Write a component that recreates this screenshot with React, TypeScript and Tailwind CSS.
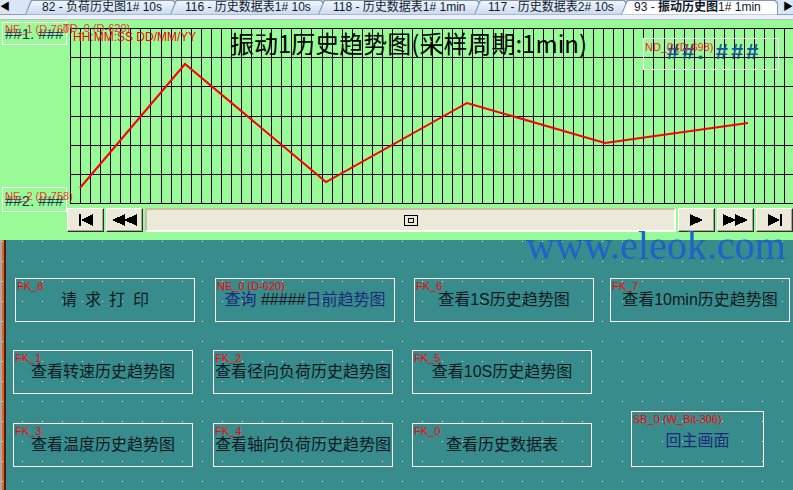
import React from "react";

const tabs = [
  { label: "82 - 负荷历史图1# 10s", box: "ml-[17px] w-[151px]", pad: "pl-[17px]" },
  { label: "116 - 历史数据表1# 10s", box: "-ml-[6px] w-[154px]", pad: "pl-[15px]" },
  { label: "118 - 历史数据表1# 1min", box: "-ml-[6px] w-[162px]", pad: "pl-[15px]" },
  { label: "117 - 历史数据表2# 10s", box: "-ml-[6px] w-[153px]", pad: "pl-[14px]" },
];

const vLines = Array.from({ length: 73 }, (_, k) => Math.round(70 + k * 10.06) + 0.5);
const hLines = Array.from({ length: 7 }, (_, j) => Math.round(28 + j * 29.17) + 0.5);
const trend = "80,188 185,64 326,182 467,103 605,143 748,123";

function Tab({ label, box, pad, active }: { label: React.ReactNode; box: string; pad: string; active?: boolean }) {
  return (
    <div className={`relative h-[15px] shrink-0 ${box}`}>
      <div className="absolute inset-0 bg-[#7f98b8] [clip-path:polygon(6px_0,calc(100%-3px)_0,100%_3px,100%_100%,0_100%)]" />
      <div
        className={`absolute inset-[1px_1px_0_1px] [clip-path:polygon(6px_0,calc(100%-3px)_0,100%_3px,100%_100%,0_100%)] ${
          active ? "bg-white" : "bg-gradient-to-b from-[#f1f6fd] to-[#c8d9ef]"
        }`}
      />
      <span className={`relative block whitespace-nowrap text-[12px] leading-[15px] text-[#101828] ${pad}`}>{label}</span>
    </div>
  );
}

function NavButton({ children }: { children: React.ReactNode }) {
  return (
    <div className="flex h-full w-[37px] shrink-0 items-center justify-center border border-t-white border-l-white border-b-[#303030] border-r-[#303030] bg-[#ece9d8] shadow-[inset_-1px_-1px_0_#aca899]">
      {children}
    </div>
  );
}

function HmiButton({ tag, className, children }: { tag: string; className: string; children: React.ReactNode }) {
  return (
    <div className={`relative flex shrink-0 items-center justify-center border border-white ${className}`}>
      <span className="absolute left-[1px] top-[2px] whitespace-nowrap text-[11px] leading-none text-[#ff0000]">{tag}</span>
      <span className="whitespace-nowrap text-[16px] leading-none text-[#0b1a22]">{children}</span>
    </div>
  );
}

export default function App() {
  return (
    <div className="relative flex h-[490px] w-[793px] flex-col overflow-hidden font-['Liberation_Sans','Noto_Sans_CJK_SC',sans-serif]">
      {/* tab strip */}
      <div className="h-[20px] shrink-0 bg-[#eef2f8] border-b border-[#b4bcc8]">
        <div className="flex h-[15px] items-center border-b border-[#8aa0bd] bg-[#dbe6f4]">
          <span className="w-[8px] shrink-0 text-[10px] leading-none text-black">◀</span>
          {tabs.map((t) => (
            <Tab key={t.label} label={t.label} box={t.box} pad={t.pad} />
          ))}
          <Tab
            active
            box="-ml-[6px] w-[157px]"
            pad="pl-[13px]"
            label={
              <>
                93 - <b className="font-bold">振动历史图</b>1# 1min
              </>
            }
          />
          <span className="ml-[5px] text-[10px] leading-none text-black">▶</span>
        </div>
      </div>

      {/* trend screen */}
      <div className="flex h-[220px] shrink-0 flex-col bg-[#98fb98]">
        <div className="relative h-[188px] shrink-0">
          <svg className="absolute inset-0" width={793} height={188} viewBox="0 20 793 188" shapeRendering="crispEdges">
            {vLines.map((x) => (
              <line key={x} x1={x} y1={28} x2={x} y2={203} stroke="#000" strokeWidth={1} />
            ))}
            {hLines.map((y) => (
              <line key={y} x1={70} y1={y} x2={793} y2={y} stroke="#000" strokeWidth={1} />
            ))}
            <polyline points={trend} fill="none" stroke="#ff0000" strokeWidth={2} shapeRendering="auto" />
          </svg>

          <div className="absolute left-[230px] top-[11px] whitespace-nowrap font-['Noto_Sans_CJK_SC',sans-serif] text-[24px] leading-none text-black">
            振动1历史趋势图(采样周期:1min)
          </div>

          <div className="absolute left-[2px] top-[2px] h-[23px] w-[65px] border border-white">
            <span className="absolute left-[2px] top-[3px] text-[15px] leading-none text-[#17305e]">##1. ###</span>
            <span className="absolute left-[2px] top-[1px] whitespace-nowrap text-[11px] leading-none text-[#ff1a1a]/90">NE_1 (D-760)</span>
          </div>
          <span className="absolute left-[63px] top-[3px] whitespace-nowrap text-[11px] leading-none text-[#e83a2a]">TD_0 (D-620)</span>
          <span className="absolute left-[73px] top-[11px] whitespace-nowrap text-[12px] leading-none text-[#ff0000]">HH:MM:SS DD/MM/YY</span>

          <div className="absolute left-[2px] top-[167px] h-[25px] w-[65px] border border-white">
            <span className="absolute left-[2px] top-[5px] text-[15px] leading-none text-[#17305e]">##2. ###</span>
            <span className="absolute left-[2px] top-[3px] whitespace-nowrap text-[11px] leading-none text-[#ff1a1a]/90">NE_2 (D-758)</span>
          </div>

          <div className="absolute left-[643px] top-[18px] h-[32px] w-[136px] border border-white">
            <span className="absolute left-[23px] top-[2px] whitespace-nowrap text-[22px] font-bold leading-none tracking-[3px] text-[#1c4f96]">##. ###</span>
            <span className="absolute left-[1px] top-[3px] whitespace-nowrap text-[11px] leading-none text-[#ff1a1a]">ND_0 (D-698)</span>
          </div>
        </div>

        {/* playback bar */}
        <div className="flex h-[24px] shrink-0 gap-[2px] pl-[67px]">
          <NavButton>
            <svg width={14} height={12} viewBox="0 0 14 12" shapeRendering="crispEdges">
              <rect x={0} y={0} width={2} height={12} fill="#000" />
              <polygon points="2,6 14,0 14,12" fill="#000" />
            </svg>
          </NavButton>
          <NavButton>
            <svg width={26} height={12} viewBox="0 0 26 12" shapeRendering="crispEdges">
              <polygon points="0,6 13,0 13,12" fill="#000" />
              <polygon points="12,6 25,0 25,12" fill="#000" />
            </svg>
          </NavButton>
          <div className="flex flex-1 items-center justify-center border-2 border-[#c6bea6] border-r-white border-b-white bg-[#ece9d8]">
            <svg width={14} height={11} viewBox="0 0 14 11" shapeRendering="crispEdges">
              <rect x={0.5} y={0.5} width={13} height={10} fill="#ece9d8" stroke="#000" />
              <rect x={4.5} y={3.5} width={5} height={4} fill="none" stroke="#000" />
            </svg>
          </div>
          <NavButton>
            <svg width={13} height={12} viewBox="0 0 13 12" shapeRendering="crispEdges">
              <polygon points="0,0 13,6 0,12" fill="#000" />
            </svg>
          </NavButton>
          <NavButton>
            <svg width={25} height={12} viewBox="0 0 25 12" shapeRendering="crispEdges">
              <polygon points="0,0 13,6 0,12" fill="#000" />
              <polygon points="12,0 25,6 12,12" fill="#000" />
            </svg>
          </NavButton>
          <NavButton>
            <svg width={14} height={12} viewBox="0 0 14 12" shapeRendering="crispEdges">
              <polygon points="0,0 12,6 0,12" fill="#000" />
              <rect x={12} y={0} width={2} height={12} fill="#000" />
            </svg>
          </NavButton>
        </div>
      </div>

      {/* menu canvas */}
      <div className="relative flex flex-1 bg-[#388c8c]">
        <div className="pointer-events-none absolute inset-0 bg-[radial-gradient(circle_at_10.5px_10.5px,#ffffff_0.6px,transparent_0.9px)] bg-[length:20px_20px] bg-[position:12px_11px]" />
        <div className="w-[6px] shrink-0 bg-[linear-gradient(90deg,#a9a9a9_0_2px,#e2621c_2px_4px,#4a1e0c_4px_6px)]" />
        <div className="relative flex -ml-[6px] flex-col pt-[38px]">
          <div className="flex">
            <HmiButton tag="FK_8" className="ml-[15px] h-[44px] w-[180px]">
              <span className="flex gap-[8px]">
                <span>请</span>
                <span>求</span>
                <span>打</span>
                <span>印</span>
              </span>
            </HmiButton>
            <HmiButton tag="NE_0 (D-620)" className="ml-[20px] h-[44px] w-[180px]">
              <span className="text-[#1b2a78]">查询 </span>
              <span className="text-[#0e1420]">#####</span>
              <span className="text-[#1b2a78]">日前趋势图</span>
            </HmiButton>
            <HmiButton tag="FK_6" className="ml-[19px] h-[44px] w-[180px]">
              查看1S历史趋势图
            </HmiButton>
            <HmiButton tag="FK_7" className="ml-[16px] h-[44px] w-[180px]">
              查看10min历史趋势图
            </HmiButton>
          </div>
          <div className="mt-[28px] flex">
            <HmiButton tag="FK_1" className="ml-[13px] h-[44px] w-[180px]">
              查看转速历史趋势图
            </HmiButton>
            <HmiButton tag="FK_2" className="ml-[20px] h-[44px] w-[180px]">
              查看径向负荷历史趋势图
            </HmiButton>
            <HmiButton tag="FK_5" className="ml-[19px] h-[44px] w-[180px]">
              查看10S历史趋势图
            </HmiButton>
          </div>
          <div className="mt-[17px] flex items-end">
            <HmiButton tag="FK_3" className="ml-[13px] h-[44px] w-[180px]">
              查看温度历史趋势图
            </HmiButton>
            <HmiButton tag="FK_4" className="ml-[20px] h-[44px] w-[180px]">
              查看轴向负荷历史趋势图
            </HmiButton>
            <HmiButton tag="FK_0" className="ml-[19px] h-[44px] w-[180px]">
              查看历史数据表
            </HmiButton>
            <HmiButton tag="SB_0 (W_Bit-306)" className="ml-[39px] h-[56px] w-[133px] pt-[4px]">
              <span className="text-[#1b2a78]">回主画面</span>
            </HmiButton>
          </div>
        </div>
      </div>

      <div className="pointer-events-none absolute left-[526px] top-[226px] whitespace-nowrap font-['Liberation_Serif',serif] text-[40px] leading-[40px] text-[#1c64c8]">
        www.eleok.com
      </div>
    </div>
  );
}
